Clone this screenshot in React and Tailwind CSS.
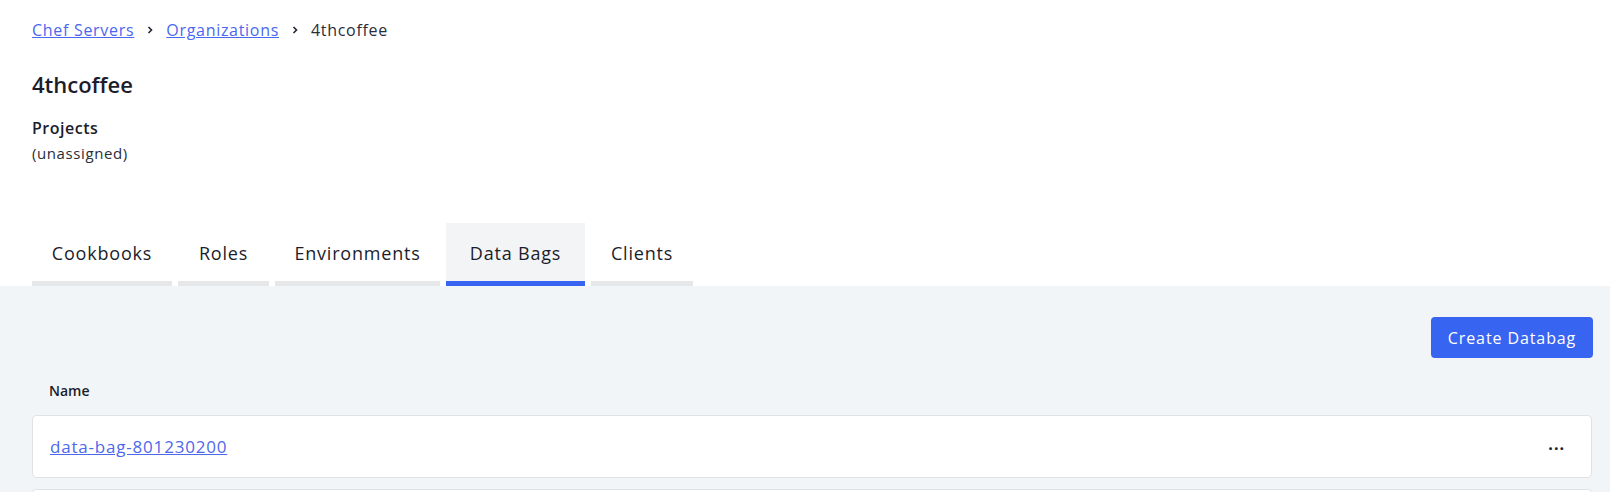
import React from 'react';

const tabs = [
  { label: 'Cookbooks', w: 'w-[140px]' },
  { label: 'Roles', w: 'w-[91px]' },
  { label: 'Environments', w: 'w-[165px]' },
  { label: 'Data Bags', w: 'w-[139px]', active: true },
  { label: 'Clients', w: 'w-[102px]' },
];

const Chevron = () => (
  <svg width="8" height="10" viewBox="0 0 8 10" className="mx-[12px]">
    <path d="M2.5 2 L5.5 5 L2.5 8" fill="none" stroke="#1f2430" strokeWidth="1.6" />
  </svg>
);

const App = () => {
  const bags = ['data-bag-801230200', ''];

  return (
    <div className="min-h-screen bg-[#f2f5f8] text-[#1b1d2b] font-['Open_Sans',sans-serif]">
      {/* Header */}
      <div className="bg-white px-8 pt-[18px]">
        <nav className="flex items-center text-[16px] leading-6 tracking-[0.7px]">
          <a href="#" className="text-[#4a68ef] underline">Chef Servers</a>
          <Chevron />
          <a href="#" className="text-[#4a68ef] underline">Organizations</a>
          <Chevron />
          <span className="text-[#2a2d3a]">4thcoffee</span>
        </nav>

        <h1 className="mt-[28px] text-[22px] leading-7 font-semibold">4thcoffee</h1>
        <div className="mt-[18px] text-[16px] leading-6 font-semibold tracking-[0.5px]">Projects</div>
        <div className="mt-[3px] text-[15px] leading-5 text-[#2a2d3a] tracking-[0.6px]">(unassigned)</div>

        <div className="mt-[60px] flex gap-[6px] relative -mb-[2px]">
          {tabs.map((t) => (
            <button
              key={t.label}
              className={`${t.w} h-[63px] flex items-center justify-center text-[18px] tracking-[0.8px] border-b-[5px] ${
                t.active ? 'bg-[#f3f4f6] border-[#3864f2]' : 'bg-white border-[#e6e7e8]'
              }`}
            >
              <span className="mt-[2px]">{t.label}</span>
            </button>
          ))}
        </div>
      </div>

      {/* Body */}
      <div className="pt-[33px] pl-8 pr-[17px]">
        <div className="flex justify-end">
          <button className="h-[41px] w-[162px] rounded-[4px] bg-[#3864f2] text-white text-[16px] tracking-[0.9px]">
            Create Databag
          </button>
        </div>

        <div className="mt-[1px] mr-[1px] h-[45px] pl-[17px] pt-[19px]">
          <span className="text-[14px] leading-5 font-semibold">Name</span>
        </div>

        <div className="mr-[1px] flex flex-col gap-[11px] mt-[11px]">
          {bags.map((b, i) => (
            <div
              key={i}
              className="h-[63px] bg-white border border-[#e0e2e5] rounded-[4px] flex items-center justify-between pl-[17px] pr-[26px]"
            >
              {b && (
                <>
                  <a href="#" className="text-[17px] text-[#4f67ea] underline tracking-[0.8px]">{b}</a>
                  <span className="font-bold text-[16px] leading-none tracking-[1px] -mt-[6px]">...</span>
                </>
              )}
            </div>
          ))}
        </div>
      </div>
    </div>
  );
};

export default App;
